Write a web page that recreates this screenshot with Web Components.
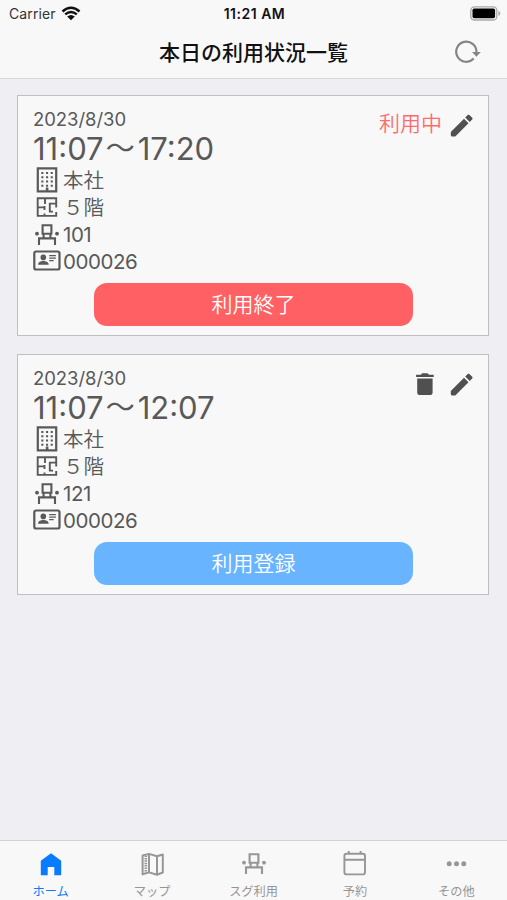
<!DOCTYPE html>
<html lang="ja">
<head>
<meta charset="utf-8">
<title>本日の利用状況一覧</title>
<style>
html,body{margin:0;height:100%}
body{font-family:Inter,"Noto Sans CJK JP",sans-serif;background:#eeeef3;overflow:hidden}
</style>
</head>
<body>
<app-screen>
  <status-bar slot="top"></status-bar>
  <nav-header slot="top">本日の利用状況一覧</nav-header>
  <booking-card date="2023/8/30" start="11:07" end="17:20" place="本社" floor="５階" seat="101" user="000026" state="利用中" action="利用終了" style="--action:#ff6063"></booking-card>
  <booking-card date="2023/8/30" start="11:07" end="12:07" place="本社" floor="５階" seat="121" user="000026" action="利用登録" deletable style="--action:#69b4ff"></booking-card>
  <tab-bar slot="bottom">
    <tab-item icon="home" active>ホーム</tab-item>
    <tab-item icon="map">マップ</tab-item>
    <tab-item icon="seat">スグ利用</tab-item>
    <tab-item icon="calendar">予約</tab-item>
    <tab-item icon="more">その他</tab-item>
  </tab-bar>
</app-screen>
<script>
const seat = '<path d="M8.6 3.2h8.8v8.6H8.6zM5 23v-6.6h16V23M9.6 12v4.4M16.4 12v4.4" fill="none" stroke="currentColor" stroke-width="2.1"/><g fill="currentColor"><circle cx="3" cy="11.7" r="1.9"/><circle cx="23" cy="11.7" r="1.9"/></g>';
const ICONS = {
  building: [28, 27, '<path d="M4.8 1.3h18.4v23H4.8z" fill="none" stroke="currentColor" stroke-width="2.2"/><path d="M8.3 6h12M8.3 10.3h12M8.3 14.5h12M8.3 18.7h12" stroke="currentColor" stroke-width="2.1" stroke-dasharray="2.1 2.6"/><path d="M12.8 20.5h2.6V24h-2.6z" fill="currentColor"/>'],
  floor: [28, 27, '<path d="M23.2 13V3.7H4.7v17.6h18.5v-3.8M12 3.7v5.6M4.7 12.8h6M11.5 11.5v4M11.5 19v2.3M16.8 12.3v5.2M23.2 9h-6.4v3.7M16 17h4" fill="none" stroke="currentColor" stroke-width="1.9" transform="translate(0 .6)"/>'],
  seat: [26, 26, seat],
  idcard: [28, 27, '<rect x="1.3" y="3.5" width="25.2" height="18" rx="1.8" fill="none" stroke="currentColor" stroke-width="2.2"/><circle cx="10.3" cy="9.4" r="2.8" fill="currentColor"/><path d="M5 16.8c0-3 3-3.9 5.3-3.9s5.4.9 5.4 3.9z" fill="currentColor"/><path d="M16.2 7.7h6.7M16.2 10.2h6.7M16.2 12.7h4.5" stroke="currentColor" stroke-width="1.2"/>'],
  pencil: [26, 26, '<path d="M1.8 19.9 15 6.7l4.5 4.5L6.3 24.4H3.3q-1.5 0-1.5-1.5zM16.2 5.5l2.5-2.5c.5-.5 1.2-.5 1.7 0l2.8 2.8c.5.5.5 1.2 0 1.7L20.7 10z" fill="currentColor"/>'],
  trash: [20, 26, '<path d="M1.1 3.8h4.7L7.3 2.3h5.2L14 3.8h4.7v2.3H1.1zM2.2 7.4h15.4v14.4q0 2.3-2.3 2.3H4.5q-2.3 0-2.3-2.3z" fill="currentColor"/>'],
  reload: [28, 26, '<path d="M20.7 19.6A10.1 10.1 0 1 1 23.4 13.5" fill="none" stroke="currentColor" stroke-width="2.2"/><path d="M19 12.9h8.8l-4.4 4.8z" fill="currentColor"/>'],
  wifi: [20, 15, '<path d="M1.5 5.5Q10-2 18.5 5.5M4.2 8.4Q10 3.6 15.8 8.4" fill="none" stroke="currentColor" stroke-width="2.5"/><path d="M6.2 10.6Q10 7.2 13.8 10.6L10 14.2z" fill="currentColor"/>'],
  battery: [31, 15, '<rect x=".8" y=".8" width="26" height="13.2" rx="3.6" fill="#f8f8f8" stroke="#a9a9a9" stroke-width="1.3"/><rect x="2.5" y="2.5" width="22.6" height="9.8" rx="1.8" fill="#000"/><path d="M28.4 5c2.5.5 2.5 4.3 0 4.8z" fill="#a9a9a9"/>'],
  home: [26, 26, '<path d="M2.8 24.3V9.8L13 2.2l10.2 7.6v14.5h-6.9v-8.4H9.7v8.4z" fill="currentColor"/>'],
  map: [26, 26, '<path d="M2.6 4.4 9 2.9l8 2.4 5.8-1.8v18L17 23.7l-8-2.3-6.4 2zM9 3v18.4M17 5.3v18.2" fill="none" stroke="currentColor" stroke-width="2" stroke-linejoin="round"/><path d="M5.8 4.5v17.2" stroke="currentColor" stroke-width="2.6" stroke-dasharray="1.5 .9"/>'],
  calendar: [26, 26, '<rect x="2.4" y="2.8" width="20.6" height="20.6" rx="2.2" fill="none" stroke="currentColor" stroke-width="1.9"/><path d="M2.4 8.7H23M6.8 0v3M18.6 0v3" stroke="currentColor" stroke-width="1.9"/>'],
  more: [26, 26, '<g fill="currentColor"><circle cx="5.2" cy="12.7" r="2.5"/><circle cx="12.5" cy="12.7" r="2.5"/><circle cx="19.8" cy="12.7" r="2.5"/></g>']
};
const define = (tag, render) => customElements.define(tag, class extends HTMLElement {
  connectedCallback() {
    if (!this.shadowRoot) this.attachShadow({mode: 'open'}).innerHTML = render(this);
  }
});

define('ui-icon', el => {
  const [w, h, body] = ICONS[el.getAttribute('name')];
  return `<style>:host{display:block;flex:none;width:${w}px;height:${h}px}svg{display:block;overflow:visible}</style>
  <svg width="${w}" height="${h}" viewBox="0 0 ${w} ${h}">${body}</svg>`;
});

define('app-screen', () => `<style>
  :host{display:flex;flex-direction:column;height:100vh}
  main{flex:1;display:flex;flex-direction:column;gap:18px;padding:16px 18px 0 17px}
  </style><slot name="top"></slot><main><slot></slot></main><slot name="bottom"></slot>`);

define('status-bar', () => `<style>
  :host{display:grid;grid-template-columns:1fr auto 1fr;align-items:center;height:26px;padding:0 6px 0 9px;background:#f8f8f8;color:#111;font-size:14px}
  .left{display:flex;align-items:center;gap:5px}
  .left span{letter-spacing:.1px;color:#333}
  .time{font-weight:600;font-size:14px;letter-spacing:.5px;margin-right:1px}
  .right{justify-self:end}
  .left,.time{padding-top:1px}
  </style><div class="left"><span>Carrier</span><ui-icon name="wifi"></ui-icon></div>
  <div class="time">11:21 AM</div><ui-icon class="right" name="battery"></ui-icon>`);

define('nav-header', () => `<style>
  :host{display:grid;grid-template-columns:1fr auto 1fr;align-items:center;height:52px;padding:0 26px;background:#f8f8f8;border-bottom:1px solid #d9d9dc;color:#111;font-size:21px;font-weight:500}
  h1{grid-column:2;font:inherit;margin:0;line-height:50px;padding-top:2px}
  ui-icon{justify-self:end;color:#858585}
  </style><h1><slot></slot></h1><ui-icon name="reload"></ui-icon>`);

define('info-row', el => `<style>
  :host{display:flex;align-items:center;height:27px;gap:2px;font-size:20.5px;line-height:27px;letter-spacing:-.45px}
  :host([icon=building]),:host([icon=floor]){letter-spacing:0;font-weight:350}
  .ic{width:28px;display:flex;justify-content:center}
  </style><span class="ic"><ui-icon name="${el.getAttribute('icon')}"></ui-icon></span><span><slot></slot></span>`);

define('booking-card', el => {
  const a = n => el.getAttribute(n);
  return `<style>
  :host{display:grid;grid-template-columns:1fr auto;box-sizing:border-box;height:241px;padding:12px 13px 0 15px;background:#f8f8f8;border:1px solid #bfbfc3;color:#595959;align-content:start}
  .date{font-size:18.5px;line-height:21px;padding-top:1px;letter-spacing:-.05px}
  .time{font-size:31px;line-height:37px;display:flex}
  .time i{font-style:normal;font-size:29px;margin:0 3px 0 2px}
  .tools{display:flex;gap:7px;align-items:center;height:30px;padding-top:2px}
  .tools ui-icon{color:#505050}
  .tools ui-icon[name=trash]{margin-right:7px}
  .state{color:#ff6b6b;font-size:21px;line-height:28px;font-weight:350;padding-bottom:2px}
  .rows,button{grid-column:1/-1}
  button{width:319px;height:43px;margin:8px auto 0 61px;border:0;border-radius:13px;background:var(--action);color:#fff;font:350 21px/43px Inter,"Noto Sans CJK JP",sans-serif;padding:0}
  </style>
  <div><div class="date">${a('date')}</div><div class="time">${a('start')}<i>～</i>${a('end')}</div></div>
  <div class="tools">${a('state') ? `<span class="state">${a('state')}</span>` : ''}${el.hasAttribute('deletable') ? '<ui-icon name="trash"></ui-icon>' : ''}<ui-icon name="pencil"></ui-icon></div>
  <div class="rows"><info-row icon="building">${a('place')}</info-row><info-row icon="floor">${a('floor')}</info-row><info-row icon="seat">${a('seat')}</info-row><info-row icon="idcard">${a('user')}</info-row></div>
  <button>${a('action')}</button>`;
});

define('tab-bar', () => `<style>
  :host{display:flex;height:59px;background:#f8f8f8;border-top:1px solid #d3d3d7}
  ::slotted(*){flex:1}
  </style><slot></slot>`);

define('tab-item', el => `<style>
  :host{display:flex;flex-direction:column;align-items:center;padding:10px 0 0;color:#969696;font-size:12.2px;line-height:18px}
  :host([active]){color:#087bff}
  ui-icon{margin-left:1px}
  span{margin-top:6px}
  </style><ui-icon name="${el.getAttribute('icon')}"></ui-icon><span><slot></slot></span>`);
</script>
</body>
</html>
